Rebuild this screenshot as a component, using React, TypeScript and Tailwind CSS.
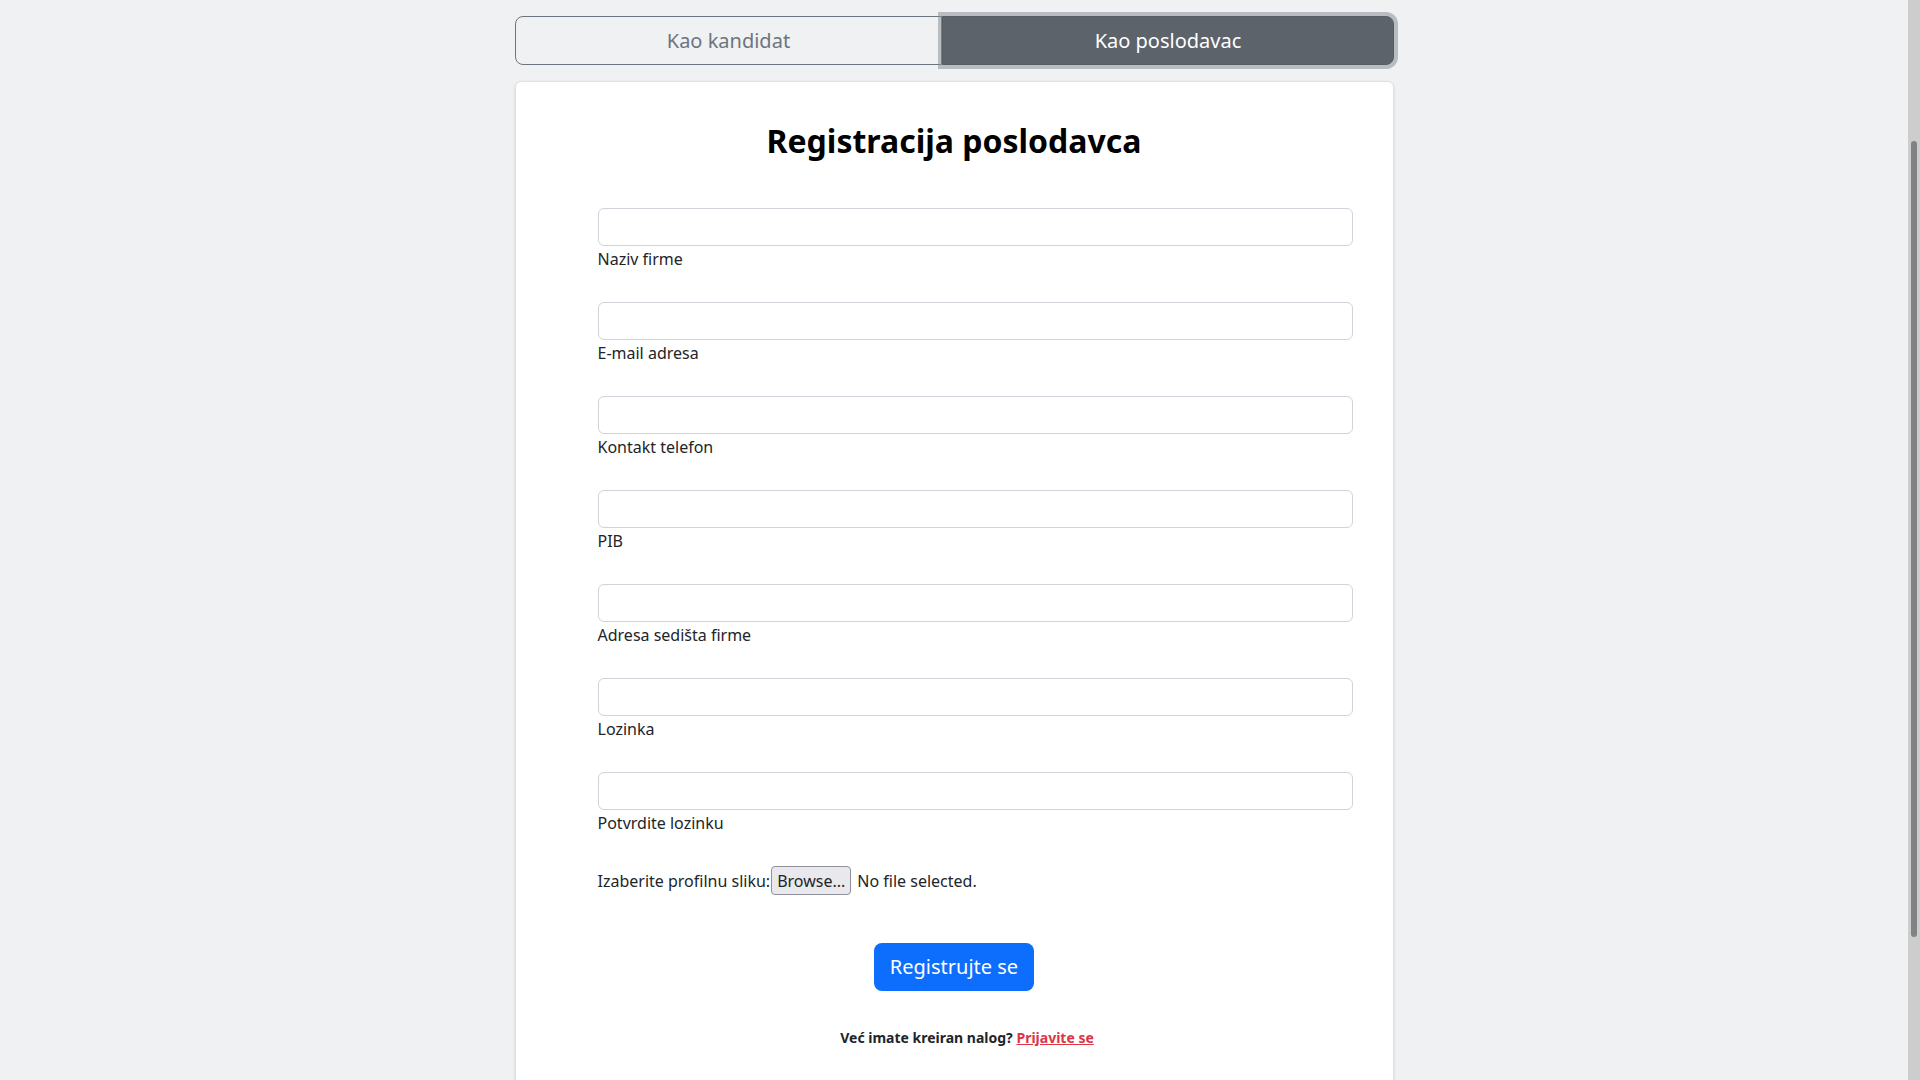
import React from "react";

const fields = [
  "Naziv firme",
  "E-mail adresa",
  "Kontakt telefon",
  "PIB",
  "Adresa sedišta firme",
  "Lozinka",
  "Potvrdite lozinku",
];

function FieldRow({ label }: { label: string }) {
  return (
    <div className="mb-[31px] flex flex-col">
      <input
        type="text"
        className="h-[38px] w-full rounded-[6px] border border-[#ced4da] bg-white px-3 outline-none"
      />
      <label className="mt-px text-[16px] leading-[24px] text-[#212529]">{label}</label>
    </div>
  );
}

export default function App() {
  return (
    <div className="flex h-screen w-full overflow-hidden bg-[#f0f1f3] font-['Noto_Sans',sans-serif] text-[#212529]">
      <main className="flex-1 overflow-hidden">
        <div className="mx-auto w-[879px] pt-[16px]">
          {/* izbor tipa naloga */}
          <div className="flex h-[49px]">
            <button className="flex-auto rounded-l-[8px] border border-[#6c757d] bg-transparent px-4 text-[20px] text-[#6c757d]">
              Kao kandidat
            </button>
            <button className="flex-auto rounded-r-[8px] border border-[#565e64] bg-[#5c636a] px-4 text-[20px] text-white shadow-[0_0_0_4px_rgba(130,138,145,0.5)]">
              Kao poslodavac
            </button>
          </div>

          {/* forma */}
          <div className="mt-[16px] h-[1100px] rounded-[6px] border border-[#dfe1e5] bg-white pt-[40px] shadow-sm">
            <h2 className="text-center text-[32px] font-bold leading-[1.2] text-black">
              Registracija poslodavca
            </h2>
            <form className="mt-[48px] ml-[82px] w-[755px]">
              {fields.map((f) => (
                <FieldRow key={f} label={f} />
              ))}
              <div className="mt-[4px] flex items-center text-[16px] leading-[24px]">
                <span>Izaberite profilnu sliku:</span>
                <span className="ml-px flex h-[29px] items-center rounded-[4px] border border-[#8f8f9d] bg-[#e9e9ed] px-[5px]">
                  Browse...
                </span>
                <span className="ml-[6px]">No file selected.</span>
              </div>
            </form>
            <div className="mt-[48px] flex justify-center">
              <button className="h-[48px] rounded-[8px] bg-[#0d6efd] px-4 text-[20px] text-white">
                Registrujte se
              </button>
            </div>
            <p className="mt-[36px] pl-[26px] text-center text-[14px] font-bold">
              Već imate kreiran nalog?{" "}
              <a href="#" className="text-[#dc3545] underline">
                Prijavite se
              </a>
            </p>
          </div>
        </div>
      </main>
      {/* traka za pomeranje */}
      <div className="flex w-[12px] flex-col bg-[#cdcdcd] pt-[141px]">
        <div className="mx-auto h-[796px] w-[6px] rounded-full bg-[#808384]" />
      </div>
    </div>
  );
}
